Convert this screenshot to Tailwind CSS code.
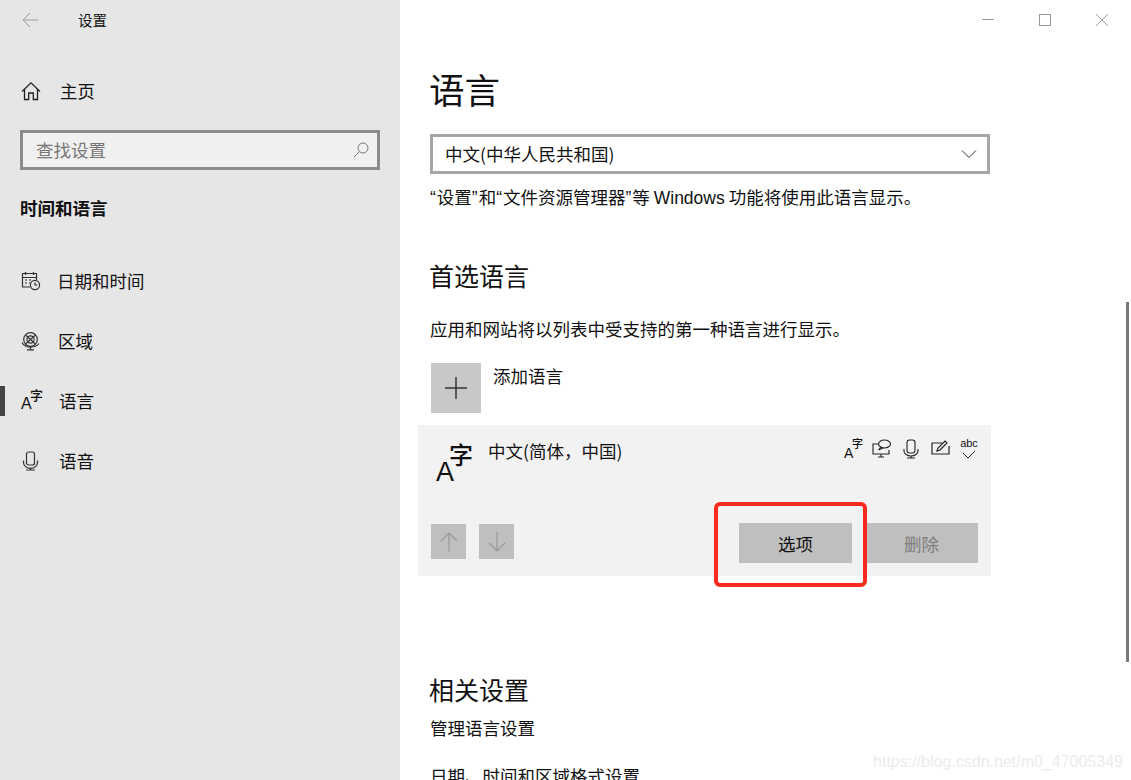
<!DOCTYPE html>
<html lang="zh-CN">
<head>
    <meta charset="UTF-8" />
    <meta name="viewport" content="width=device-width, initial-scale=1.0" />
    <title>设置</title>
    <script src="https://cdn.jsdelivr.net/npm/@tailwindcss/browser@4"></script>
</head>
<body class="bg-white overflow-hidden font-['Noto_Sans_CJK_SC','Liberation_Sans',sans-serif] text-[#111]">
<div class="relative flex h-[780px] w-[1131px] overflow-hidden">

    <!-- Sidebar -->
    <aside class="w-[400px] h-full shrink-0 bg-[#e6e6e6] pl-5">
        <div class="flex items-center h-10 leading-none">
            <svg class="w-4 h-4 ml-[2px]" viewBox="0 0 16 16" fill="none" stroke="#9a9a9a" stroke-width="1"><path d="M1 8h15M8 1 1 8l7 7"/></svg>
            <span class="ml-[40px] text-[14.5px]">设置</span>
        </div>

        <div class="flex items-center h-[26px] mt-[38px]">
            <svg class="w-[20px] h-[20px] shrink-0 ml-[1px]" viewBox="0 0 20 20" fill="none" stroke="#222" stroke-width="1.3"><path d="M1 10.5 10 1.8l9 8.7M3.5 8.5V18.5h4.2v-6.5h4.6v6.5h4.2V8.5"/></svg>
            <span class="ml-[19px] text-[17.5px] leading-none">主页</span>
        </div>

        <div class="flex items-center justify-between w-[360px] h-10 mt-[26px] bg-[#f0f0f0] border-[3px] border-[#8c8c8c] pl-[13px] pr-[8px]">
            <span class="text-[17.5px] leading-none text-[#777]">查找设置</span>
            <svg class="w-4 h-4" viewBox="0 0 16 16" fill="none" stroke="#777" stroke-width="1"><circle cx="10" cy="6" r="5"/><path d="M6.5 9.5 1 15"/></svg>
        </div>

        <h2 class="mt-[25px] text-[17.5px] font-bold leading-[26px]">时间和语言</h2>

        <nav class="mt-[30px] -ml-5">
            <div class="flex items-center h-[60px] pl-5">
                <svg class="w-[20px] h-[20px] shrink-0 ml-[1px]" viewBox="0 0 20 20" fill="none" stroke="#333" stroke-width="1.2"><path d="M9 16H1.5V2.5h14V9M1.5 6.5h14M4.5 1v3M12.5 1v3M4 9h2M8 9h2M4 12h2M8 12h1"/><circle cx="14" cy="14" r="4.6"/><path d="M14 11.5V14h2.4"/></svg>
                <span class="ml-4 text-[17.5px] leading-none">日期和时间</span>
            </div>
            <div class="flex items-center h-[60px] pl-5">
                <svg class="w-[20px] h-[20px] shrink-0 ml-[1px]" viewBox="0 0 20 20" fill="none" stroke="#333" stroke-width="1.2"><circle cx="9.5" cy="8.5" r="6.8"/><circle cx="9.5" cy="8.5" r="3.6"/><path d="M4.5 4 14.5 13M14.5 4 4.5 13"/><path d="M1 11.5C4 17.5 14 17.5 18 12.5M9.5 16v2.5M6 18.8h7"/></svg>
                <span class="ml-[17px] text-[17.5px] leading-none">区域</span>
            </div>
            <div class="relative flex items-center h-[60px] pl-5">
                <div class="absolute left-0 top-[15px] w-[5px] h-[30px] bg-[#444]"></div>
                <span class="relative block w-[20px] h-[20px] shrink-0 ml-[1px] leading-none">
                    <span class="absolute left-0 bottom-[-1px] text-[16px] leading-none font-['Liberation_Sans']">A</span>
                    <span class="absolute right-[-2px] top-[-3px] text-[13px] font-medium leading-none">字</span>
                </span>
                <span class="ml-[18px] text-[17.5px] leading-none">语言</span>
            </div>
            <div class="flex items-center h-[60px] pl-5">
                <svg class="w-[20px] h-[20px] shrink-0 ml-[1px]" viewBox="0 0 20 20" fill="none" stroke="#333" stroke-width="1.2"><rect x="5.5" y="1" width="8" height="13" rx="2"/><path d="M2.5 9.5v2a6 5 0 0 0 14 0v-2M9.5 16.5v2.5M5 19h9"/></svg>
                <span class="ml-[18px] text-[17.5px] leading-none">语音</span>
            </div>
        </nav>
    </aside>

    <!-- Main -->
    <main class="relative flex-1 pl-[30px]">
        <h1 class="pt-[63px] -ml-px text-[35.5px] leading-[52px]">语言</h1>

        <div class="flex items-center justify-between w-[560px] h-10 mt-[19px] border-[3px] border-[#a6a6a6] pl-[12px] pr-[10px] pb-px">
            <span class="text-[17.5px] leading-none">中文(中华人民共和国)</span>
            <svg class="w-[16px] h-[16px]" viewBox="0 0 16 16" fill="none" stroke="#333" stroke-width="1"><path d="M1 4.5 8 11.5l7-7"/></svg>
        </div>

        <p class="mt-[10px] text-[17.5px] leading-[26px]"><span class="font-['Liberation_Sans'] pr-px">“</span>设置<span class="font-['Liberation_Sans'] pr-px">”</span>和<span class="font-['Liberation_Sans'] pr-px">“</span>文件资源管理器<span class="font-['Liberation_Sans'] pr-px">”</span>等 <span class="font-['Liberation_Sans']">Windows</span> 功能将使用此语言显示。</p>

        <h2 class="mt-[46px] -ml-px text-[25px] leading-[36px]">首选语言</h2>

        <p class="mt-[23px] text-[17.5px] leading-[26px]">应用和网站将以列表中受支持的第一种语言进行显示。</p>

        <div class="flex mt-[21px]">
            <div class="flex items-center justify-center w-[50px] h-[50px] ml-px bg-[#c8c8c8]">
                <svg class="w-[24px] h-[24px]" viewBox="0 0 24 24" fill="none" stroke="#333" stroke-width="1.5"><path d="M12 1v22M1 12h22"/></svg>
            </div>
            <span class="ml-3 text-[17.5px] leading-[26px]">添加语言</span>
        </div>

        <section class="w-[573px] h-[151px] mt-3 -ml-3 bg-[#f2f2f2] flex flex-col justify-between">
            <div class="flex pt-[13px]">
                <span class="relative block w-[38px] h-[40px] ml-[18px] mt-[6px] shrink-0">
                    <span class="absolute left-0 bottom-[-2px] text-[27px] leading-none font-['Liberation_Sans']">A</span>
                    <span class="absolute right-[1px] top-[-2px] text-[24px] font-medium leading-none">字</span>
                </span>
                <span class="ml-[15px] -translate-x-px text-[17.5px] leading-[26px]">中文(简体，中国)</span>
                <div class="ml-auto mr-[14px] flex items-center h-[22px]">
                    <span class="relative block w-[18px] h-[20px] leading-none mr-[10px]">
                        <span class="absolute left-0 bottom-[-1px] text-[14px] leading-none font-['Liberation_Sans']">A</span>
                        <span class="absolute right-[-1px] top-[-1px] text-[11px] font-medium leading-none">字</span>
                    </span>
                    <svg class="w-[20px] h-[20px] mr-[11px]" viewBox="0 0 20 20" fill="none" stroke="#222" stroke-width="1.1"><path d="M6 5H1v10h16v-4M6 18h6M9 15v3"/><ellipse cx="12.5" cy="5" rx="6" ry="4"/><path d="m9 8-2.5 3 4.5-2"/></svg>
                    <svg class="w-[16px] h-[20px] mr-[12px]" viewBox="0 0 16 20" fill="none" stroke="#222" stroke-width="1.1"><rect x="4" y="1" width="8" height="13" rx="2.5"/><path d="M1 10v2a7 5 0 0 0 14 0v-2M8 17v2M4 19h8"/></svg>
                    <svg class="w-[20px] h-[20px] mr-[10px]" viewBox="0 0 20 20" fill="none" stroke="#222" stroke-width="1.2"><path d="M11 4H1v11h17V7M6 12l1-3 7-7 2 2-7 7z"/></svg>
                    <span class="flex flex-col items-center w-[16px] h-[22px]">
                        <span class="text-[11px] leading-[11px] font-['Liberation_Sans']">abc</span>
                        <svg class="w-[14px] h-[9px] mt-px" viewBox="0 0 14 9" fill="none" stroke="#222" stroke-width="1"><path d="m1 3 5 5 7-7"/></svg>
                    </span>
                </div>
            </div>
            <div class="flex items-start pb-[13px] pl-[13px] pr-[13px]">
                <div class="flex items-center justify-center w-[35px] h-[35px] mt-px bg-[#bfbfbf]">
                    <svg class="w-[18px] h-[20px]" viewBox="0 0 18 20" fill="none" stroke="#969696" stroke-width="1.1"><path d="M9 20V1M1 9l8-8 8 8"/></svg>
                </div>
                <div class="flex items-center justify-center w-[35px] h-[35px] mt-px ml-[13px] bg-[#bfbfbf]">
                    <svg class="w-[18px] h-[20px]" viewBox="0 0 18 20" fill="none" stroke="#969696" stroke-width="1.1"><path d="M9 0v19M1 11l8 8 8-8"/></svg>
                </div>
                <button class="w-[113px] h-10 ml-auto bg-[#bfbfbf] text-[17.5px] leading-none pt-px">选项</button>
                <button class="w-[113px] h-10 ml-[13px] bg-[#bfbfbf] text-[17.5px] leading-none pt-px text-[#7d7d7d]">删除</button>
            </div>
        </section>

        <h2 class="mt-[95px] -ml-px text-[25px] leading-[36px]">相关设置</h2>
        <p class="mt-[8px] text-[17.5px] leading-[26px]">管理语言设置</p>
        <p class="mt-[22px] text-[17.5px] leading-[26px]">日期、时间和区域格式设置</p>

        <!-- Window controls -->
        <div class="absolute top-[14px] right-[23px] flex items-center gap-[45px]">
            <svg class="w-3 h-3" viewBox="0 0 12 12" fill="none" stroke="#999" stroke-width="1"><path d="M0 5.5h12"/></svg>
            <svg class="w-3 h-3" viewBox="0 0 12 12" fill="none" stroke="#999" stroke-width="1"><rect x=".5" y=".5" width="11" height="11"/></svg>
            <svg class="w-3 h-3" viewBox="0 0 12 12" fill="none" stroke="#999" stroke-width="1"><path d="m0 0 12 12M12 0 0 12"/></svg>
        </div>

        <!-- Scrollbar -->
        <div class="absolute left-[726px] top-[302px] w-[3px] h-[360px] bg-[#7a7a7a]"></div>

        <!-- Red annotation -->
        <div class="absolute left-[314px] top-[502px] w-[153px] h-[85px] border-4 border-[#fb2a1c] rounded-[6px]"></div>

        <!-- Watermark -->
        <div class="absolute right-[8px] top-[751px] text-[16px] leading-[22px] font-['Liberation_Sans'] text-[#ececec]">https://blog.csdn.net/m0_47005349</div>
    </main>
</div>
</body>
</html>
